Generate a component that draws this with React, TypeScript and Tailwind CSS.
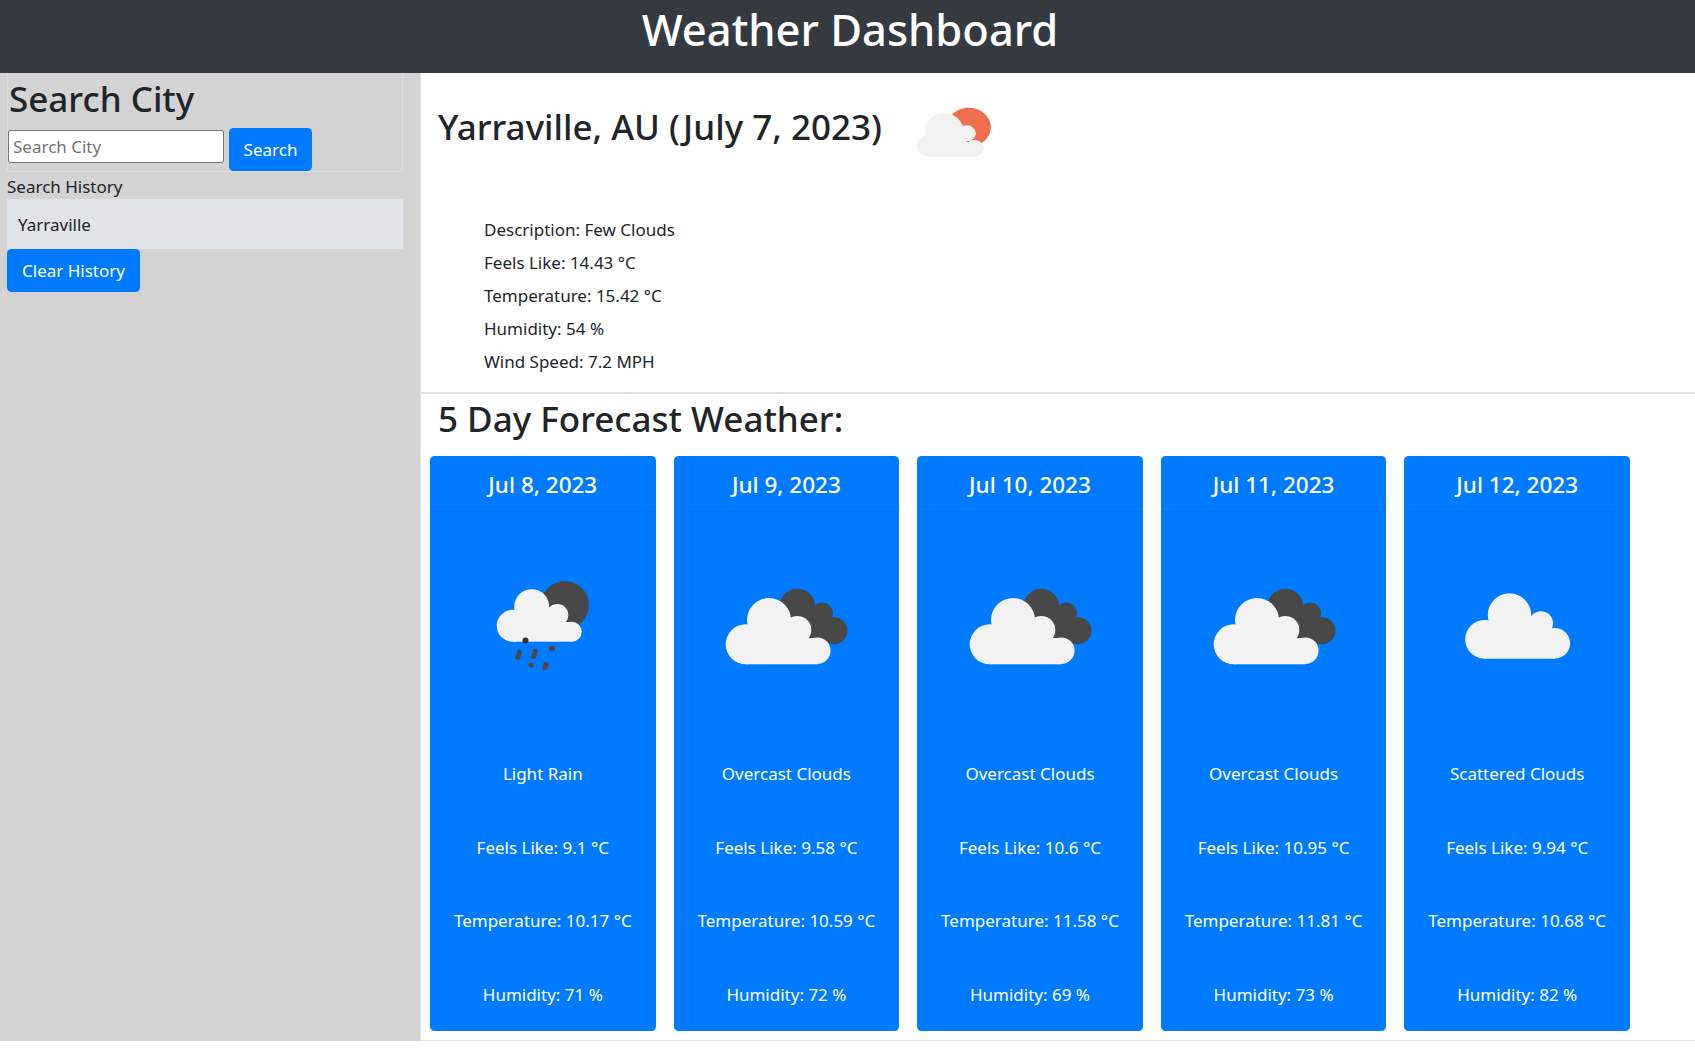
const font = { fontFamily: '"Noto Sans", sans-serif' };

function Cloud({ parts }: { parts: number[][] }) {
  return (
    <>
      {parts.map(([cx, cy, r], i) => (
        <circle key={i} cx={cx} cy={cy} r={r} fill="#f2f2f2" />
      ))}
    </>
  );
}

function RainIcon() {
  return (
    <svg viewBox="0 0 150 150" className="block w-[150px] h-[150px] mx-auto">
      <circle cx="97" cy="55" r="24" fill="#484848" />
      <Cloud parts={[[44.7, 75.7, 16], [63.7, 56.7, 17.5], [89.3, 65, 11], [103.7, 81.7, 10]]} />
      <rect x="45" y="72" width="59" height="19.7" fill="#f2f2f2" />
      <rect x="60" y="60" width="30" height="15" fill="#f2f2f2" />
      <g fill="#484848">
        <circle cx="57.5" cy="90.5" r="3" fill="#333333" />
        <rect x="48" y="100" width="5" height="10" rx="1.5" transform="rotate(18 50.5 105)" />
        <rect x="64" y="99" width="5" height="10" rx="1.5" transform="rotate(18 66.5 104)" />
        <rect x="75" y="112" width="5" height="8" rx="1.5" transform="rotate(18 77.5 116)" />
        <circle cx="84" cy="98.5" r="3" />
        <circle cx="63" cy="115" r="2.6" />
      </g>
    </svg>
  );
}

function OvercastIcon() {
  return (
    <svg viewBox="0 0 150 150" className="block w-[150px] h-[150px] mx-auto">
      <g fill="#484848">
        <circle cx="86.3" cy="56.7" r="18" />
        <circle cx="111.3" cy="63.3" r="10.7" />
        <circle cx="123" cy="80.7" r="13.5" />
        <rect x="85" y="60" width="30" height="30" />
      </g>
      <Cloud parts={[[34.7, 94.3, 20], [58, 70, 22], [86.3, 80, 14], [106.3, 100.7, 13.3]]} />
      <rect x="35" y="88" width="71" height="26.3" fill="#f2f2f2" />
      <rect x="55" y="70" width="32" height="20" fill="#f2f2f2" />
    </svg>
  );
}

function ScatteredIcon() {
  return (
    <svg viewBox="0 0 150 150" className="block w-[150px] h-[150px] mx-auto">
      <Cloud parts={[[42.5, 89.3, 19.3], [67.5, 65, 21.7], [99, 73.3, 12], [112.8, 93.3, 15.3]]} />
      <rect x="42" y="84" width="71" height="24.7" fill="#f2f2f2" />
      <rect x="60" y="70" width="40" height="16" fill="#f2f2f2" />
    </svg>
  );
}

function FewCloudsIcon() {
  return (
    <svg viewBox="0 0 100 100" preserveAspectRatio="none" className="block w-[113px] h-[100px] shrink-0">
      <circle cx="60" cy="49.3" r="19.5" fill="#ee6e4f" />
      <Cloud parts={[[25, 67.7, 11], [38.3, 52, 16.7], [58.3, 55.3, 8], [65, 70.3, 8.3]]} />
      <rect x="25" y="64" width="40" height="14.7" fill="#f2f2f2" />
      <rect x="36" y="54" width="22" height="12" fill="#f2f2f2" />
    </svg>
  );
}

const forecast = [
  { date: 'Jul 8, 2023', icon: <RainIcon />, desc: 'Light Rain', feels: '9.1', temp: '10.17', hum: '71' },
  { date: 'Jul 9, 2023', icon: <OvercastIcon />, desc: 'Overcast Clouds', feels: '9.58', temp: '10.59', hum: '72' },
  { date: 'Jul 10, 2023', icon: <OvercastIcon />, desc: 'Overcast Clouds', feels: '10.6', temp: '11.58', hum: '69' },
  { date: 'Jul 11, 2023', icon: <OvercastIcon />, desc: 'Overcast Clouds', feels: '10.95', temp: '11.81', hum: '73' },
  { date: 'Jul 12, 2023', icon: <ScatteredIcon />, desc: 'Scattered Clouds', feels: '9.94', temp: '10.68', hum: '82' },
];

export default function App() {
  return (
    <div className="bg-white text-[#212529]" style={font}>
      <header className="h-[73px] bg-[#343a40] text-white flex items-center justify-center pb-[14px]">
        <h1 className="text-[43.5px] font-medium leading-none pl-[5px]">Weather Dashboard</h1>
      </header>

      <div className="flex h-[968px]">
        <aside className="w-[420px] shrink-0 bg-[#d3d3d3] pl-[7px]">
          <div className="w-[396px]">
            <div className="h-[99px] border border-[#dcdcdc] border-t-0">
              <h2 className="text-[35px] font-medium leading-[48px] h-[48px] pl-[1px] pt-[2px]">Search City</h2>
              <form className="flex items-start mt-[7px]">
                <input
                  placeholder="Search City"
                  className="w-[216px] h-[33px] mt-[2px] bg-white border border-[#767676] rounded-[2px] px-[4px] text-[17px] placeholder:text-[#757575]"
                />
                <button type="button" className="ml-[5px] w-[83px] h-[43px] bg-[#007bff] text-white rounded-[4.5px] text-[17px]">
                  Search
                </button>
              </form>
            </div>
            <div className="h-[27px] leading-[30px] text-[17px]">Search History</div>
            <div className="h-[50px] bg-[#e0e3e8] flex items-center pl-[11px] pt-[1px] text-[17px]">Yarraville</div>
            <button type="button" className="w-[133px] h-[43px] bg-[#007bff] text-white rounded-[4.5px] pt-[1px] text-[17px]">
              Clear History
            </button>
          </div>
        </aside>

        <main className="flex-1 border-l border-b border-[#dee2e6] min-w-0">
          <section className="h-[321px] border-b-2 border-[#dee2e6]">
            <div className="flex items-start h-[136px]">
              <h2 className="text-[35px] font-medium leading-[45px] pl-[17px] pt-[31px] w-[480px] whitespace-nowrap">
                Yarraville, AU (July 7, 2023)
              </h2>
              <div className="pt-[5px]">
                <FewCloudsIcon />
              </div>
            </div>
            <ul className="pl-[63px] pt-[4px] text-[17px] leading-[33px]">
              <li>Description: Few Clouds</li>
              <li>Feels Like: 14.43 °C</li>
              <li>Temperature: 15.42 °C</li>
              <li>Humidity: 54 %</li>
              <li>Wind Speed: 7.2 MPH</li>
            </ul>
          </section>

          <h2 className="text-[35px] font-medium leading-[50px] h-[62px] pl-[17px]">5 Day Forecast Weather:</h2>

          <div className="flex gap-[18px] pl-[9px]">
            {forecast.map((day) => (
              <div key={day.date} className="w-[225.6px] h-[575px] bg-[#007bff] text-white rounded-[4.5px] text-center">
                <div className="h-[56px] border-b border-[#0074f0] flex items-center justify-center pt-[3px] text-[22.5px] font-medium">
                  {day.date}
                </div>
                <div className="pt-[38px]">
                  {day.icon}
                  <div className="mt-[37px] text-[17px]">
                    <div className="h-[73.5px] flex items-center justify-center">{day.desc}</div>
                    <div className="h-[73.5px] flex items-center justify-center">Feels Like: {day.feels} °C</div>
                    <div className="h-[73.5px] flex items-center justify-center">Temperature: {day.temp} °C</div>
                    <div className="h-[73.5px] flex items-center justify-center">Humidity: {day.hum} %</div>
                  </div>
                </div>
              </div>
            ))}
          </div>
        </main>
      </div>
    </div>
  );
}
